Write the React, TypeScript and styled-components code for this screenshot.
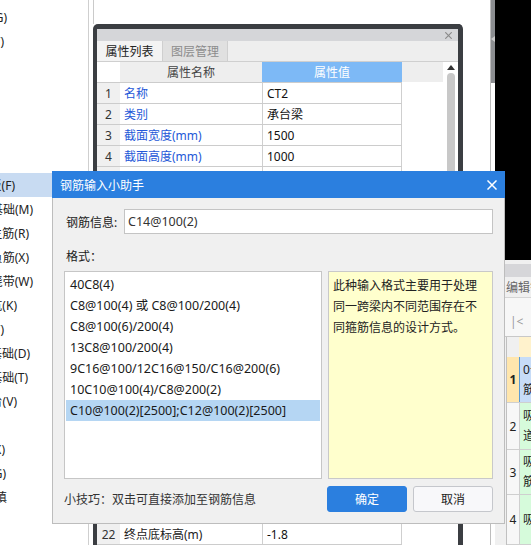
import React from 'react';
import styled, { createGlobalStyle } from 'styled-components';

const GlobalStyle = createGlobalStyle`
  *, *::before, *::after { box-sizing: border-box; }
  html, body { margin: 0; padding: 0; background: #fff; }
  body {
    width: 531px;
    height: 545px;
    overflow: hidden;
    font-family: "Noto Sans", "Noto Sans CJK SC", sans-serif;
    font-size: 12px;
    color: #222;
  }
`;

const Screen = styled.div`
  position: relative;
  display: flex;
  width: 531px;
  height: 545px;
  overflow: hidden;
  background: #fff;
`;

/* ---------- left component menu ---------- */

const SideMenu = styled.div`
  flex: none;
  width: 89px;
  padding-top: 5px;
  border-right: 1px solid #cfcfcf;
  overflow: hidden;
`;

const MenuItem = styled.div<{ $active?: boolean }>`
  height: 24px;
  display: flex;
  align-items: center;
  background: ${p => (p.$active ? '#c8dbf2' : 'transparent')};
`;

const MenuText = styled.div<{ $end: number }>`
  width: ${p => p.$end}px;
  display: flex;
  justify-content: flex-end;
  white-space: nowrap;
  color: #222;
`;

/* ---------- property window ---------- */

const Workspace = styled.div`
  flex: none;
  width: 401px;
  display: flex;
  padding-left: 4px;
`;

const PanelColumn = styled.div`
  width: 370px;
  display: flex;
  flex-direction: column;
`;

const Stub = styled.div`
  height: 24px;
  border-left: 1px solid #cacaca;
`;

const Frame = styled.div`
  flex: 1;
  display: flex;
  flex-direction: column;
  border: 4px solid #3b3e42;
  border-top-width: 5px;
  border-right-width: 5px;
  border-bottom: 0;
  border-radius: 5px 5px 0 0;
  background: #fff;
  overflow: hidden;
`;

const FrameTitle = styled.div`
  height: 12px;
  display: flex;
  align-items: center;
  justify-content: flex-end;
  padding-right: 6px;
  background: #d5d6d9;
`;

const TabBar = styled.div`
  height: 21px;
  display: flex;
  background: #eeeeee;
  border-bottom: 1px solid #cfcfcf;
`;

const Tab = styled.div<{ $active?: boolean; $w: number }>`
  width: ${p => p.$w}px;
  display: flex;
  align-items: center;
  justify-content: center;
  border-right: 1px solid #cfcfcf;
  background: ${p => (p.$active ? '#f3f3f3' : '#e0e0e0')};
  color: ${p => (p.$active ? '#222' : '#8c8c8c')};
`;

const TableArea = styled.div`
  flex: 1;
  display: flex;
`;

const PropTable = styled.div`
  width: 305px;
  display: flex;
  flex-direction: column;
`;

const HeadRow = styled.div`
  height: 21px;
  display: flex;
  border-bottom: 1px solid #cccccc;
`;

const HeadCell = styled.div<{ $w: number; $tone: 'blank' | 'gray' | 'blue' }>`
  width: ${p => p.$w}px;
  display: flex;
  align-items: center;
  justify-content: center;
  background: ${p => (p.$tone === 'blue' ? '#7db9f6' : p.$tone === 'gray' ? '#eeeeee' : '#fff')};
  color: ${p => (p.$tone === 'blue' ? '#fff' : '#444')};
`;

const PropRow = styled.div`
  height: 21px;
  flex: none;
  display: flex;
  border-bottom: 1px solid #cccccc;
`;

const IndexCell = styled.div`
  width: 23px;
  display: flex;
  align-items: center;
  justify-content: center;
  background: #f0f0f0;
  color: #333;
`;

const NameCell = styled.div<{ $pub?: boolean }>`
  width: 142px;
  display: flex;
  align-items: center;
  padding-left: 4px;
  white-space: nowrap;
  overflow: hidden;
  color: ${p => (p.$pub ? '#2458d8' : '#222')};
`;

const ValueCell = styled.div`
  width: 140px;
  display: flex;
  align-items: center;
  padding-left: 4px;
  border-left: 1px solid #cfcfcf;
  border-right: 1px solid #cfcfcf;
  color: #111;
`;

const Gutter = styled.div`
  width: 41px;
  display: flex;
  flex-direction: column;
`;

const GutterHead = styled.div`
  height: 20px;
  background: #eeeeee;
`;

const ScrollCol = styled.div`
  width: 15px;
  display: flex;
  flex-direction: column;
  align-items: center;
  padding-top: 3px;
`;

const ArrowUp = styled.div`
  width: 0;
  height: 0;
  border-left: 4px solid transparent;
  border-right: 4px solid transparent;
  border-bottom: 5px solid #333;
`;

const Thumb = styled.div`
  width: 8px;
  height: 300px;
  margin-top: 3px;
  border-radius: 4px;
  background: #c8c8c8;
`;

/* ---------- right side ---------- */

const ScrollStrip = styled.div`
  flex: none;
  width: 5px;
  border-left: 1px solid #bdbdbd;
`;

const StripThumb = styled.div`
  height: 83px;
  background: #8c8e91;
  padding-top: 29px;
`;

const RightArea = styled.div`
  flex: none;
  width: 36px;
  display: flex;
  flex-direction: column;
`;

const BlackArea = styled.div`
  height: 260px;
  background: #000;
`;

const EditorPanel = styled.div`
  flex: 1;
  display: flex;
  flex-direction: column;
  background: #f0f0f0;
  white-space: nowrap;
  overflow: hidden;
`;

const EditorGap = styled.div`
  height: 4px;
`;

const EditorStrip = styled.div`
  height: 13px;
  background: #d6d6d9;
`;

const EditorTab = styled.div`
  height: 21px;
  line-height: 21px;
  padding-left: 11px;
  color: #666;
  border-bottom: 1px solid #d5d5d5;
`;

const EditorToolbar = styled.div`
  height: 39px;
  display: flex;
  align-items: center;
  padding: 9px 0 0 15px;
  background: #f7f7f7;
  color: #9a9a9a;
  border-bottom: 1px solid #c8c8c8;
`;

const EditorGrid = styled.div`
  margin-left: 11px;
  display: flex;
  flex-direction: column;
  border-left: 1px solid #c0c0c0;
`;

const GridHead = styled.div`
  height: 20px;
  display: flex;
`;

const GridIndexBlank = styled.div`
  width: 12px;
  background: #f0f0f0;
`;

const GridHeadCell = styled.div`
  flex: 1;
  background: #fff2cc;
`;

const GridRow = styled.div<{ $h: number }>`
  height: ${p => p.$h}px;
  flex: none;
  display: flex;
  border-bottom: 1px solid #cfcfcf;
`;

const GridIndex = styled.div<{ $active?: boolean }>`
  width: 12px;
  display: flex;
  align-items: center;
  justify-content: center;
  background: ${p => (p.$active ? '#ffe6ad' : '#f7f7f7')};
  font-weight: ${p => (p.$active ? 700 : 400)};
  color: #222;
`;

const GridCell = styled.div<{ $active?: boolean }>`
  flex: 1;
  display: flex;
  flex-direction: column;
  justify-content: center;
  padding-left: 3px;
  line-height: 20px;
  overflow: hidden;
  background: ${p => (p.$active ? '#c7dcf7' : '#d6fbdb')};
  border-left: 1px solid ${p => (p.$active ? '#5b9bd5' : '#cfcfcf')};
`;

/* ---------- dialog ---------- */

const Dialog = styled.div`
  position: absolute;
  left: 52px;
  top: 171px;
  width: 453px;
  height: 353px;
  display: flex;
  flex-direction: column;
`;

const DialogTitle = styled.div`
  height: 27px;
  flex: none;
  display: flex;
  align-items: center;
  justify-content: space-between;
  padding: 0 8px 0 8px;
  background: #2b7fdf;
  color: #fff;
`;

const DialogBody = styled.div`
  flex: 1;
  display: flex;
  flex-direction: column;
  padding: 11px;
  background: #f0f0f0;
  border: 1px solid #bdbdbd;
  border-top: 0;
`;

const InfoRow = styled.div`
  height: 25px;
  display: flex;
  align-items: center;
`;

const InfoLabel = styled.div`
  width: 60px;
  padding-left: 2px;
`;

const InfoInput = styled.input`
  flex: 1;
  height: 25px;
  margin: 0;
  padding: 0 3px;
  border: 1px solid #c4c4c4;
  background: #fff;
  font-family: "Noto Sans", "Noto Sans CJK SC", sans-serif;
  font-size: 12.5px;
  color: #333;
  outline: none;
`;

const FormatLabel = styled.div`
  margin-top: 12px;
  height: 22px;
  line-height: 22px;
  padding-left: 2px;
`;

const MainRow = styled.div`
  margin-top: 3px;
  height: 208px;
  display: flex;
  gap: 6px;
`;

const FormatList = styled.div`
  width: 258px;
  padding: 2px 1px;
  border: 1px solid #c6c6c6;
  background: #fff;
`;

const FormatItem = styled.div<{ $selected?: boolean }>`
  height: 21px;
  line-height: 21px;
  padding-left: 4px;
  font-size: 12.5px;
  white-space: nowrap;
  color: #1a1a1a;
  background: ${p => (p.$selected ? '#b5d6f3' : 'transparent')};
`;

const HintBox = styled.div`
  flex: 1;
  padding: 3px 4px 0 4px;
  border: 1px solid #c9c9c9;
  background: #ffffcd;
  line-height: 21px;
  color: #222;
`;

const Footer = styled.div`
  margin-top: 7px;
  height: 26px;
  display: flex;
  align-items: center;
  gap: 6px;
`;

const Tip = styled.div`
  flex: 1;
  color: #333;
`;

const Button = styled.button<{ $primary?: boolean }>`
  width: 80px;
  height: 26px;
  margin: 0;
  padding: 0;
  border-radius: 3px;
  border: 1px solid ${p => (p.$primary ? '#2b7fdf' : '#c5c7cc')};
  background: ${p => (p.$primary ? '#2b7fdf' : '#f8f8fa')};
  color: ${p => (p.$primary ? '#fff' : '#222')};
  font-family: "Noto Sans", "Noto Sans CJK SC", sans-serif;
  font-size: 12px;
`;

const sideItems: { text: string; end: number; active?: boolean }[] = [
  { text: '地沟(G)', end: 7 },
  { text: '柱墩(Y)', end: 4 },
  { text: '', end: 0 },
  { text: '', end: 0 },
  { text: '', end: 0 },
  { text: '', end: 0 },
  { text: '', end: 0 },
  { text: '筏板(F)', end: 15, active: true },
  { text: '筏板基础(M)', end: 33 },
  { text: '筏板主筋(R)', end: 29 },
  { text: '筏板负筋(X)', end: 29 },
  { text: '后浇带(W)', end: 33 },
  { text: '集水坑(K)', end: 17 },
  { text: '柱墩(Y)', end: 4 },
  { text: '独立基础(D)', end: 30 },
  { text: '条形基础(T)', end: 28 },
  { text: '桩承台(V)', end: 17 },
  { text: '', end: 0 },
  { text: '垫层(X)', end: 5 },
  { text: '地沟(G)', end: 6 },
  { text: '回填', end: 7 },
];

const propRows: { name: string; value: string; pub?: boolean }[] = [
  { name: '名称', value: 'CT2', pub: true },
  { name: '类别', value: '承台梁', pub: true },
  { name: '截面宽度(mm)', value: '1500', pub: true },
  { name: '截面高度(mm)', value: '1000', pub: true },
  { name: '轴线距梁左边线距离(mm)', value: '(750)', pub: true },
  { name: '跨数量', value: '', pub: true },
  { name: '箍筋', value: 'C14@100(2)', pub: true },
  { name: '肢数', value: '2', pub: true },
  { name: '上部钢筋', value: '', pub: true },
  { name: '下部钢筋', value: '', pub: true },
  { name: '侧面钢筋', value: '', pub: true },
  { name: '拉筋', value: '', pub: true },
  { name: '材质', value: '现浇混凝土' },
  { name: '混凝土类型', value: '(现浇砼)' },
  { name: '混凝土强度等级', value: '(C30)' },
  { name: '混凝土外加剂', value: '(无)' },
  { name: '泵送类型', value: '(混凝土泵)' },
  { name: '截面周长(m)', value: '5' },
  { name: '截面面积(m²)', value: '1.5' },
  { name: '起点顶标高(m)', value: '-0.8' },
  { name: '终点顶标高(m)', value: '-0.8' },
  { name: '终点底标高(m)', value: '-1.8' },
];

const formats = [
  '40C8(4)',
  'C8@100(4) 或 C8@100/200(4)',
  'C8@100(6)/200(4)',
  '13C8@100/200(4)',
  '9C16@100/12C16@150/C16@200(6)',
  '10C10@100(4)/C8@200(2)',
  'C10@100(2)[2500];C12@100(2)[2500]',
];

const gridRows: { lines: string[]; h: number; active?: boolean }[] = [
  { lines: ['0号', '筋'], h: 46, active: true },
  { lines: ['吸', '道'], h: 47 },
  { lines: ['吸', '筋'], h: 45 },
  { lines: ['吸'], h: 50 },
];

const CloseIcon = ({ size, color, width }: { size: number; color: string; width: number }) => (
  <svg width={size} height={size} viewBox="0 0 10 10">
    <path d="M1 1 L9 9 M9 1 L1 9" stroke={color} strokeWidth={width} strokeLinecap="square" />
  </svg>
);

export default function App() {
  return (
    <>
      <GlobalStyle />
      <Screen>
        <SideMenu>
          {sideItems.map((item, i) => (
            <MenuItem key={i} $active={item.active}>
              <MenuText $end={item.end}>
                <span>{item.text}</span>
              </MenuText>
            </MenuItem>
          ))}
        </SideMenu>

        <Workspace>
          <PanelColumn>
            <Stub />
            <Frame>
              <FrameTitle>
                <CloseIcon size={7} color="#8a8a8a" width={1.6} />
              </FrameTitle>
              <TabBar>
                <Tab $active $w={66}>属性列表</Tab>
                <Tab $w={65}>图层管理</Tab>
              </TabBar>
              <TableArea>
                <PropTable>
                  <HeadRow>
                    <HeadCell $w={23} $tone="blank" />
                    <HeadCell $w={142} $tone="gray">属性名称</HeadCell>
                    <HeadCell $w={140} $tone="blue">属性值</HeadCell>
                  </HeadRow>
                  {propRows.map((row, i) => (
                    <PropRow key={i}>
                      <IndexCell>{i + 1}</IndexCell>
                      <NameCell $pub={row.pub}>{row.name}</NameCell>
                      <ValueCell>{row.value}</ValueCell>
                    </PropRow>
                  ))}
                </PropTable>
                <Gutter>
                  <GutterHead />
                </Gutter>
                <ScrollCol>
                  <ArrowUp />
                  <Thumb />
                </ScrollCol>
              </TableArea>
            </Frame>
          </PanelColumn>
        </Workspace>

        <ScrollStrip>
          <StripThumb>
            <svg width="4" height="6" viewBox="0 0 4 6">
              <path d="M0 3 L4 0 L4 6 Z" fill="#c9c9c9" />
            </svg>
          </StripThumb>
        </ScrollStrip>

        <RightArea>
          <BlackArea />
          <EditorPanel>
            <EditorGap />
            <EditorStrip />
            <EditorTab>编辑钢筋</EditorTab>
            <EditorToolbar>|&lt;</EditorToolbar>
            <EditorGrid>
              <GridHead>
                <GridIndexBlank />
                <GridHeadCell />
              </GridHead>
              {gridRows.map((row, i) => (
                <GridRow key={i} $h={row.h}>
                  <GridIndex $active={row.active}>{i + 1}</GridIndex>
                  <GridCell $active={row.active}>
                    {row.lines.map((l, j) => (
                      <span key={j}>{l}</span>
                    ))}
                  </GridCell>
                </GridRow>
              ))}
            </EditorGrid>
          </EditorPanel>
        </RightArea>

        <Dialog>
          <DialogTitle>
            <span>钢筋输入小助手</span>
            <CloseIcon size={10} color="#fff" width={1.5} />
          </DialogTitle>
          <DialogBody>
            <InfoRow>
              <InfoLabel>钢筋信息:</InfoLabel>
              <InfoInput defaultValue="C14@100(2)" readOnly />
            </InfoRow>
            <FormatLabel>格式：</FormatLabel>
            <MainRow>
              <FormatList>
                {formats.map((f, i) => (
                  <FormatItem key={f} $selected={i === formats.length - 1}>
                    {f}
                  </FormatItem>
                ))}
              </FormatList>
              <HintBox>
                此种输入格式主要用于处理
                <br />
                同一跨梁内不同范围存在不
                <br />
                同箍筋信息的设计方式。
              </HintBox>
            </MainRow>
            <Footer>
              <Tip>小技巧：双击可直接添加至钢筋信息</Tip>
              <Button $primary>确定</Button>
              <Button>取消</Button>
            </Footer>
          </DialogBody>
        </Dialog>
      </Screen>
    </>
  );
}
